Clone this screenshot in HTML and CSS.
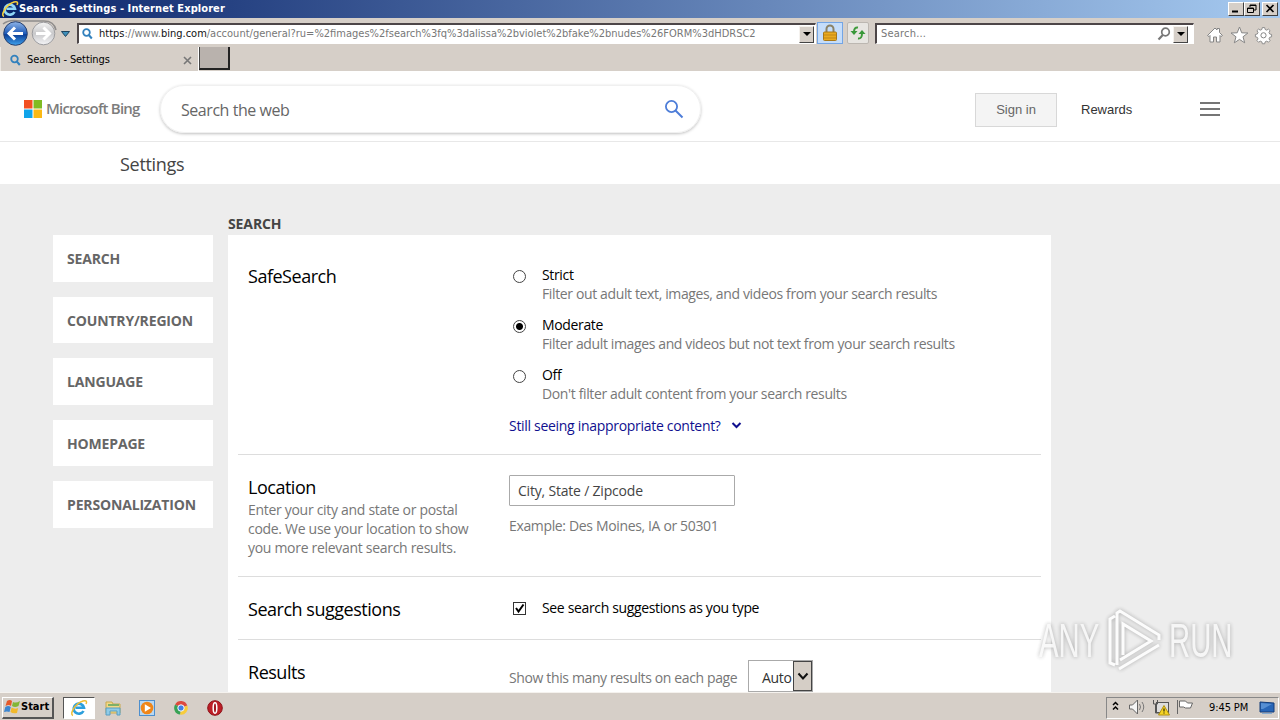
FILE: index.html
```html
<!DOCTYPE html>
<html lang="en">

<head>
    <meta charset="UTF-8">
    <meta name="viewport" content="width=device-width, initial-scale=1.0">
    <title>Search - Settings</title>
    <link rel="stylesheet" href="styles.css">
</head>

<body>
    <div class="screen">
        <div class="titlebar">
            <svg class="ie" width="18" height="18" viewBox="0 0 18 18">
                <path d="M13.500 12A5.200 5 0 1 1 14 8.800H5.500" fill="none" stroke="#8fd6f8" stroke-width="2.600" />
                <path d="M3 16.500C-1 15.500 5 4.500 13 2c4-1 4 1 3 3" fill="none" stroke="#f5cf3c" stroke-width="1.600" />
            </svg>
            <span class="title">Search - Settings - Internet Explorer</span>
            <div class="winBtns">
                <div class="winBtn"><svg width="14" height="11"><path d="M3 8.500h6" stroke="#000" stroke-width="2" /></svg></div>
                <div class="winBtn"><svg width="14" height="11"><path d="M5 4V2h6v5H9M5 2.500h6M2.500 5h6v4.500h-6zM2.500 5.500h6" fill="none" stroke="#000" /></svg></div>
                <div class="winBtn closeBtn"><svg width="14" height="11"><path d="M3.500 2l7 7M10.500 2l-7 7" stroke="#000" stroke-width="1.700" /></svg></div>
            </div>
        </div>

        <div class="navbar">
            <svg class="arrows" width="76" height="28" viewBox="0 0 76 28">
                <defs>
                    <linearGradient id="blue" x1="0" y1="0" x2="0" y2="1">
                        <stop offset="0" stop-color="#8fb5e8" />
                        <stop offset=".5" stop-color="#1f5bb8" />
                        <stop offset=".55" stop-color="#0c3f98" />
                        <stop offset="1" stop-color="#3fa3ee" />
                    </linearGradient>
                    <linearGradient id="gray" x1="0" y1="0" x2="0" y2="1">
                        <stop offset="0" stop-color="#f4f4f4" />
                        <stop offset=".5" stop-color="#c9c9cb" />
                        <stop offset="1" stop-color="#f4f4f6" />
                    </linearGradient>
                </defs>
                <path d="M3 6Q9 1 20 3h24q10 0 12 9" fill="none" stroke="#8f8d8c" stroke-width="1.500" />
                <circle cx="15.500" cy="15.500" r="11.800" fill="url(#blue)" stroke="#27406f" />
                <path d="M23 15.500H9M15 9.500l-6 6 6 6" fill="none" stroke="#fff" stroke-width="3" />
                <circle cx="43.500" cy="15.500" r="11.300" fill="url(#gray)" stroke="#9c9c9f" />
                <path d="M36 15.500h13M43.500 9.500l6 6-6 6" fill="none" stroke="#fff" stroke-width="3" />
                <path d="M61.500 13.500h8l-4 5z" fill="#3f90ba" stroke="#1f4560" />
            </svg>
            <div class="address">
                <svg width="12" height="12" viewBox="0 0 12 12"><circle cx="4.500" cy="4.500" r="3.300" fill="none" stroke="#3281bd" stroke-width="1.800" /><path d="M6.800 7l3 3.500" stroke="#3281bd" stroke-width="2" /></svg>
                <span class="url"><span class="host">https</span>://www.<span class="host">bing.com</span>/account/general?ru=%2fimages%2fsearch%3fq%3dalissa%2bviolet%2bfake%2bnudes%26FORM%3dHDRSC2</span>
                <div class="dropBtn"></div>
            </div>
            <div class="lockBtn">
                <svg width="14" height="18" viewBox="0 0 14 18"><path d="M3.500 9V5a3.500 3.500 0 0 1 7 0v4" fill="none" stroke="#8b8266" stroke-width="2" /><rect x=".5" y="8" width="13" height="8.500" rx="1" fill="#eaaa1e" stroke="#a87818" /><path d="M1 11h12M1 14h12" stroke="#c18717" /></svg>
            </div>
            <div class="refreshBtn">
                <svg width="16" height="14" viewBox="0 0 16 14"><path d="M8 1.500Q4 1 4 6M8 12.500q4 .500 4-5" fill="none" stroke="#3f9b3c" stroke-width="2" /><path d="M.5 5h7L4 9zM8.500 8h7L12 4z" fill="#38983a" /></svg>
            </div>
            <div class="findBox">
                <span>Search...</span>
                <svg width="14" height="14" viewBox="0 0 14 14"><circle cx="8.500" cy="5" r="3.800" fill="none" stroke="#777" stroke-width="1.700" /><path d="M5.800 8L1.500 12.500" stroke="#777" stroke-width="2.200" /></svg>
                <div class="dropBtn"></div>
            </div>
            <svg class="tools" width="68" height="20" viewBox="0 0 68 20" fill="#fff" stroke="#858585">
                <path d="M1.500 10.500L9 3l2 2V3.500h2.500v4l3 3-1.500 1-1-1V17h-3.500v-5h-3v5H4v-6.500l-1 1z" />
                <path d="M33.500 2l2.200 5.800 6.200.2-4.900 3.800 1.700 6-5.200-3.400-5.200 3.400 1.700-6L25 8l6.200-.2z" />
                <path d="M56.700 2.500h2.600l.5 2.100 1.800.8 1.900-1.200 1.800 1.800-1.200 1.900.8 1.800 2.100.5v2.600l-2.100.5-.8 1.800 1.200 1.900-1.800 1.800-1.900-1.200-1.800.8-.5 2.100h-2.600l-.5-2.100-1.800-.8-1.900 1.200-1.800-1.800 1.200-1.900-.8-1.800-2.100-.5v-2.600l2.100-.5.8-1.800-1.200-1.900 1.800-1.800 1.900 1.200 1.800-.8z" transform="translate(5.300 .3) scale(.9)" />
                <circle cx="57.500" cy="10.300" r="2.600" />
            </svg>
        </div>

        <div class="tabbar">
            <div class="tab">
                <svg width="12" height="12" viewBox="0 0 12 12"><circle cx="4.500" cy="5" r="3.300" fill="none" stroke="#3281bd" stroke-width="1.800" /><path d="M6.800 7.500l3 3.500" stroke="#3281bd" stroke-width="2" /></svg>
                <span class="tabTitle">Search - Settings</span>
                <svg class="tabClose" width="9" height="9"><path d="M1 1l7 7M8 1L1 8" stroke="#777" stroke-width="1.600" /></svg>
            </div>
            <div class="newTab"></div>
        </div>

        <div class="page">
            <div class="header">
                <svg class="msLogo" width="18" height="18">
                    <path d="M0 0h8.500v8.500H0z" fill="#f25022" />
                    <path d="M9.500 0H18v8.500H9.500z" fill="#80bb22" />
                    <path d="M0 9.500h8.500V18H0z" fill="#10a4ea" />
                    <path d="M9.500 9.500H18V18H9.500z" fill="#fbb914" />
                </svg>
                <span class="brand">Microsoft Bing</span>
                <div class="searchBox">
                    <span>Search the web</span>
                    <svg width="20" height="20" viewBox="0 0 20 20"><circle cx="7.500" cy="7.500" r="5.600" fill="none" stroke="#4d7dd8" stroke-width="1.800" /><path d="M11.500 11.500l7 7" stroke="#4d7dd8" stroke-width="2" /></svg>
                </div>
                <div class="signIn">Sign in</div>
                <span class="rewards">Rewards</span>
                <div class="menu"><i></i><i></i><i></i></div>
            </div>
            <div class="subHeader"><span class="settings">Settings</span></div>

            <div class="content">
                <ul class="sideNav">
                    <li>SEARCH</li>
                    <li>COUNTRY/REGION</li>
                    <li>LANGUAGE</li>
                    <li>HOMEPAGE</li>
                    <li>PERSONALIZATION</li>
                </ul>
                <div class="main">
                    <h2>SEARCH</h2>
                    <div class="card">
                        <div class="row safe">
                            <div class="label"><h3>SafeSearch</h3></div>
                            <div class="field">
                                <div class="option">
                                    <span class="radio"></span>
                                    <div>
                                        <p class="name">Strict</p>
                                        <p class="desc">Filter out adult text, images, and videos from your search results</p>
                                    </div>
                                </div>
                                <div class="option">
                                    <span class="radio checked"></span>
                                    <div>
                                        <p class="name">Moderate</p>
                                        <p class="desc">Filter adult images and videos but not text from your search results</p>
                                    </div>
                                </div>
                                <div class="option">
                                    <span class="radio"></span>
                                    <div>
                                        <p class="name">Off</p>
                                        <p class="desc">Don't filter adult content from your search results</p>
                                    </div>
                                </div>
                                <div class="still"><span>Still seeing inappropriate content?</span>
                                    <svg width="11" height="8"><path d="M1.500 2l4 4 4-4" fill="none" stroke="#10108f" stroke-width="2" /></svg>
                                </div>
                            </div>
                        </div>
                        <div class="row location">
                            <div class="label">
                                <h3>Location</h3>
                                <p class="desc">Enter your city and state or postal<br>code. We use your location to show<br>you more relevant search results.</p>
                            </div>
                            <div class="field">
                                <div class="cityInput">City, State / Zipcode</div>
                                <p class="desc example">Example: Des Moines, IA or 50301</p>
                            </div>
                        </div>
                        <div class="row suggest">
                            <div class="label"><h3>Search suggestions</h3></div>
                            <div class="field">
                                <div class="option">
                                    <span class="check"><svg width="11" height="11"><path d="M2 5l2.500 3.500L9.500 1.500" fill="none" stroke="#000" stroke-width="2" /></svg></span>
                                    <p class="name">See search suggestions as you type</p>
                                </div>
                            </div>
                        </div>
                        <div class="row results">
                            <div class="label"><h3>Results</h3></div>
                            <div class="field">
                                <p class="desc">Show this many results on each page</p>
                                <div class="select"><span>Auto</span>
                                    <div class="selectBtn"><svg width="12" height="9"><path d="M1.500 1.500L6 6.500l4.500-5" fill="none" stroke="#111" stroke-width="2" /></svg></div>
                                </div>
                            </div>
                        </div>
                    </div>
                </div>
            </div>

            <div class="watermark">
                <span>ANY</span>
                <svg width="60" height="66" viewBox="0 0 60 66" fill="none" stroke="#fff" stroke-width="3">
                    <path d="M10 8L5 11v44l5 2M12 57V5L15 3 54 27v5M18 47V16l28 17-31 19M54 37L14 61" />
                </svg>
                <span>RUN</span>
            </div>
        </div>

        <div class="taskbar">
            <div class="start">
                <svg width="17" height="16" viewBox="0 0 17 16">
                    <path d="M3 2q3-2 5 0L7 7Q5 5 1.500 7z" fill="#e5592a" />
                    <path d="M9 3q3 1.500 7-1l-1.500 5Q11 9 8 7z" fill="#82b636" />
                    <path d="M1.300 8q3-2 5.500 0l-1.300 5Q3 12 0 13z" fill="#3d86d0" />
                    <path d="M7.600 8.500q3 2 6.500.500L13 14q-4 1-6.500-1z" fill="#f2b92c" />
                </svg>
                <span>Start</span>
            </div>
            <div class="quick">
                <div class="app active">
                    <svg width="18" height="18" viewBox="0 0 18 18">
                        <path d="M13.500 12A5.200 5 0 1 1 14 8.800H5.500" fill="none" stroke="#2c9fdc" stroke-width="2.600" />
                        <path d="M3 16.500C-1 15.500 5 4.500 13 2c4-1 4 1 3 3" fill="none" stroke="#edbd35" stroke-width="1.500" />
                    </svg>
                </div>
                <div class="app">
                    <svg width="18" height="18" viewBox="0 0 18 18">
                        <path d="M2 3h6l1 2h7v9H2z" fill="#f2d987" stroke="#c9a94f" />
                        <path d="M4 6h11" stroke="#7eb068" stroke-width="2" />
                        <path d="M2 16V9h14v7h-3v-4H6v4z" fill="#8ecbe7" stroke="#579dc2" />
                    </svg>
                </div>
                <div class="app">
                    <svg width="18" height="18" viewBox="0 0 18 18">
                        <rect x="1.500" y="1.500" width="15" height="15" fill="#b9d8f2" stroke="#4d8fce" />
                        <circle cx="9" cy="9" r="6.300" fill="#f08619" />
                        <path d="M6.800 5.300v7.400L13 9z" fill="#fff" />
                    </svg>
                </div>
                <div class="app">
                    <svg width="18" height="18" viewBox="0 0 18 18">
                        <path d="M9 9L3.100 5.500A6.700 6.700 0 0 1 15.300 6.500z" fill="#dd4a3e" />
                        <path d="M9 9l6.300-2.500A6.700 6.700 0 0 1 8 15.600z" fill="#f8cc3b" />
                        <path d="M9 9l-1 6.600A6.700 6.700 0 0 1 3.100 5.500z" fill="#38a255" />
                        <circle cx="9" cy="9" r="3.200" fill="#4280e5" stroke="#fff" />
                    </svg>
                </div>
                <div class="app">
                    <svg width="18" height="18" viewBox="0 0 18 18">
                        <circle cx="9" cy="9" r="7.300" fill="#bd1e26" stroke="#8d1118" />
                        <ellipse cx="9" cy="9" rx="1.800" ry="5.200" fill="#a01820" stroke="#fff" stroke-width="1.500" />
                    </svg>
                </div>
            </div>
            <div class="tray">
                <svg class="trayIcons" width="88" height="18" viewBox="0 0 88 18">
                    <path d="M2 6l2.500-2.500L7 6M2 10.500L4.500 8 7 10.500" fill="none" stroke="#000" stroke-width="1.500" />
                    <path d="M18.500 6h3l5-5v14l-5-5h-3z" fill="#f5f5f5" stroke="#666" />
                    <path d="M28.500 5q2 3 0 6M31 3q3.500 5 0 10" fill="none" stroke="#777" />
                    <rect x="45.500" y="3.500" width="12" height="10" fill="#ddd" stroke="#555" />
                    <path d="M42.500 1v4h4V1M44.500 5v9h5" fill="none" stroke="#555" />
                    <path d="M53 6.500l5.500 9.500H47.500z" fill="#f5d324" stroke="#b29212" />
                    <path d="M53 9.500v3M53 13.500v1" stroke="#000" />
                    <path d="M66.500 1v14M68.500 2h6l2 2h5l-2 5h-5l-2-1h-4z" fill="#fff" stroke="#666" />
                </svg>
                <span class="clock">9:45 PM</span>
                <svg width="16" height="14" viewBox="0 0 16 14"><path d="M1 1l14 1v9H1z" fill="#2866b7" stroke="#143d79" /><path d="M2 2l11 1-9 5H2z" fill="#568fd3" /><path d="M3 12.500h10" stroke="#86abd0" /></svg>
            </div>
        </div>
    </div>
</body>

</html>
```
FILE: styles.css
```css
* {
    margin: 0;
    padding: 0;
    box-sizing: border-box;
    list-style: none;
}

body {
    overflow: hidden;
    font-family: "Open Sans", "Noto Sans", sans-serif;
}

svg {
    display: block;
    flex: none;
}

.screen {
    width: 1280px;
    height: 720px;
    display: flex;
    flex-direction: column;
    background: #d6cfc8;
    white-space: nowrap;
}

/* browser window */
.titlebar {
    height: 18px;
    flex: none;
    display: flex;
    align-items: center;
    padding: 0 2px 0 1px;
    background: linear-gradient(to right, #0a246a, #a6caf0);
    color: #fff;
}

.title {
    font: bold 11px/18px "DejaVu Sans Condensed", "DejaVu Sans", sans-serif;
    letter-spacing: 0.08px;
    margin-right: auto;
}

.winBtns {
    display: flex;
}

.winBtn {
    width: 16px;
    height: 14px;
    background: #d6cfc8;
    border: 1px solid #fff;
    border-right-color: #404040;
    border-bottom-color: #404040;
}

.closeBtn {
    margin-left: 2px;
}

.navbar {
    height: 29px;
    flex: none;
    display: flex;
    padding-top: 5px;
}

.arrows {
    margin: -5px 1px 0 0;
}

.address,
.findBox {
    height: 21px;
    display: flex;
    align-items: center;
    background: #fff;
    border: 1px solid #fff;
    border-top: 2px solid #4d4648;
    border-left: 2px solid #4d4648;
    font: 11px/18px "DejaVu Sans Condensed", "DejaVu Sans", sans-serif;
    color: #777;
}

.address {
    width: 739px;
    padding-left: 3px;
}

.url {
    margin-left: 5px;
    margin-right: auto;
}

.host {
    color: #111;
}

.dropBtn {
    width: 15px;
    height: 17px;
    flex: none;
    background: #d6cfc8;
    border: 1px solid #f5f2ee;
    border-right-color: #444;
    border-bottom-color: #444;
    display: flex;
    align-items: center;
    justify-content: center;
}

.address .dropBtn {
    margin-right: 1px;
}

.dropBtn::after {
    content: "";
    border: 4px solid transparent;
    border-top-color: #000;
    border-bottom: 0;
}

.lockBtn,
.refreshBtn {
    height: 22px;
    display: flex;
    align-items: center;
    justify-content: center;
    margin-top: -1px;
}

.lockBtn {
    width: 26px;
    margin-left: 1px;
    background: #c5ddfa;
    border: 1px solid #73a5e5;
}

.refreshBtn {
    width: 22px;
    margin-left: 4px;
    background: #e7e5e1;
    border: 1px solid #bcb7b1;
    border-radius: 2px;
}

.findBox {
    width: 319px;
    margin-left: 6px;
    padding: 0 5px 0 4px;
}

.findBox span {
    margin-right: auto;
    letter-spacing: 0.2px;
}

.findBox svg {
    margin-right: 2px;
}

.tools {
    margin: 2px 0 0 12px;
}

.tabbar {
    height: 24px;
    flex: none;
    display: flex;
}

.tab {
    width: 199px;
    display: flex;
    align-items: center;
    padding: 2px 6px 0 9px;
    border-left: 1px solid #eeeae4;
    border-right: 1px solid #fff;
    font: 11px/20px "DejaVu Sans Condensed", "DejaVu Sans", sans-serif;
}

.tabTitle {
    margin-left: 5px;
    margin-right: auto;
    letter-spacing: -0.1px;
}

.newTab {
    width: 31px;
    height: 23px;
    background: #b9b2ad;
    border: 1px solid #f5f2ee;
    border-width: 0 2px 2px 1px;
    border-right-color: #222;
    border-bottom-color: #222;
    border-left-color: #444;
}

/* page */
.page {
    height: 621px;
    flex: none;
    background: #ededed;
    position: relative;
    overflow: hidden;
}

.header {
    height: 71px;
    display: flex;
    align-items: center;
    padding: 7px 60px 0 24px;
    background: #fff;
    border-bottom: 1px solid #e8e8e8;
}

.msLogo {
    margin-top: -2px;
}

.brand {
    width: 94px;
    margin: -3px 20px 0 4px;
    font: 600 15px/20px "Open Sans", sans-serif;
    letter-spacing: -0.8px;
    color: #7c7c7c;
}

.searchBox {
    width: 541px;
    height: 48px;
    margin-top: -1px;
    margin-right: 274px;
    padding: 0 16px 0 20px;
    display: flex;
    align-items: center;
    justify-content: space-between;
    border-radius: 25px;
    border: 1px solid #f0f0f0;
    box-shadow: 0 1px 3px rgba(0, 0, 0, 0.25);
    font-size: 16px;
    letter-spacing: -0.45px;
    color: #666;
}

.searchBox span {
    padding-top: 2px;
}

.signIn,
.rewards {
    font: 13px/32px "Liberation Sans", sans-serif;
}

.signIn {
    width: 82px;
    height: 34px;
    text-align: center;
    background: #f4f4f4;
    border: 1px solid #d8d8d8;
    color: #666;
}

.rewards {
    margin-left: 24px;
    margin-right: auto;
    color: #333;
}

.menu {
    width: 20px;
    height: 14px;
    margin-top: -1px;
    display: flex;
    flex-direction: column;
    justify-content: space-between;
}

.menu i {
    height: 2px;
    background: #767676;
}

.subHeader {
    height: 42px;
    padding-left: 120px;
    background: #fff;
    font-size: 18px;
    letter-spacing: -0.3px;
    line-height: 44px;
    color: #444;
}

.content {
    display: flex;
    padding-left: 53px;
}

.sideNav {
    width: 160px;
    margin: 51px 15px 0 0;
}

.sideNav li {
    height: 46.6px;
    margin-bottom: 15px;
    padding-left: 14px;
    background: #fff;
    font-size: 14px;
    font-weight: bold;
    letter-spacing: -0.16px;
    line-height: 48px;
    color: #666;
}

.main {
    width: 823px;
}

.main h2 {
    height: 51px;
    padding-top: 31px;
    font-size: 14px;
    letter-spacing: -0.1px;
    line-height: 18px;
    color: #444;
}

.card {
    height: 460px;
    padding: 0 10px;
    background: #fff;
}

.row {
    display: flex;
    border-bottom: 1px solid #ddd;
    padding-left: 10px;
}

.label {
    width: 261px;
    flex: none;
}

.label h3 {
    font-size: 18px;
    letter-spacing: -0.48px;
    line-height: 24px;
    font-weight: normal;
}

.safe {
    height: 220px;
    padding-top: 30px;
}

.safe h3 {
    margin-top: -1px;
}

.location {
    height: 122px;
    padding-top: 20px;
}

.suggest {
    height: 63px;
    padding-top: 20px;
}

.results {
    height: 80px;
    padding-top: 20px;
    border: 0;
}

.name,
.desc,
.still,
.cityInput,
.select {
    font-size: 14px;
    letter-spacing: -0.35px;
    line-height: 19px;
}

.desc {
    letter-spacing: -0.37px;
    color: #777;
}

.option {
    display: flex;
    height: 50.2px;
    padding-left: 4px;
}

.safe .option > div {
    margin-top: -1px;
}

.name {
    padding-top: 1px;
}

.radio {
    width: 13px;
    height: 13px;
    margin: 5px 16px 0 0;
    border: 1px solid #444;
    border-radius: 50%;
}

.checked {
    background: radial-gradient(circle, #000 3px, #fff 4px);
}

.still {
    display: flex;
    align-items: center;
    gap: 10px;
    letter-spacing: -0.3px;
    color: #10108f;
}

.cityInput {
    width: 226px;
    height: 31px;
    border: 1px solid #aaa;
    border-radius: 1px;
    padding-left: 8px;
    letter-spacing: -0.2px;
    line-height: 30px;
    color: #444;
}

.example {
    margin-top: 10px;
    letter-spacing: -0.35px;
}

.location .label .desc {
    margin-top: 1px;
    letter-spacing: -0.3px;
}

.check {
    width: 13px;
    height: 13px;
    margin: 5px 16px 0 0;
    border: 1px solid #333;
}

.results .field {
    display: flex;
}

.results .desc {
    width: 229px;
    margin-right: 10px;
    line-height: 35px;
}

.select {
    width: 65px;
    height: 32px;
    border: 1px solid #aaa;
    padding-left: 13px;
    display: flex;
    justify-content: space-between;
    line-height: 33px;
    color: #333;
}

.selectBtn {
    width: 19px;
    height: 30px;
    background: #d5cec6;
    border: 1px solid #444;
    display: flex;
    align-items: center;
    justify-content: center;
}

.watermark {
    position: absolute;
    left: 1039px;
    top: 537px;
    height: 66px;
    display: flex;
    align-items: center;
    gap: 4px;
    color: #f8f8f8;
    font: 48px/66px "Liberation Sans", sans-serif;
    filter: drop-shadow(0 0 2px rgba(0, 0, 0, 0.35));
    opacity: 0.85;
}

.watermark span {
    width: 62px;
    transform: scaleX(0.61);
    transform-origin: left;
}

/* taskbar */
.taskbar {
    height: 28px;
    flex: none;
    display: flex;
    align-items: center;
    padding: 2px 1px 0 2px;
    border-top: 1px solid #f5f2ee;
}

.start {
    width: 52px;
    height: 22px;
    display: flex;
    align-items: center;
    padding-left: 1px;
    border: 1px solid #fff;
    border-right: 2px solid #555;
    border-bottom: 2px solid #555;
    font: bold 11px/18px "DejaVu Sans Condensed", "DejaVu Sans", sans-serif;
}

.quick {
    display: flex;
    margin-left: 9px;
    margin-right: auto;
}

.app {
    width: 32px;
    height: 22px;
    margin-right: 2px;
    display: flex;
    align-items: center;
    justify-content: center;
}

.active {
    background: #fff;
    border: 1px solid #555;
    border-right-color: #fff;
    border-bottom-color: #fff;
}

.tray {
    width: 173px;
    height: 22px;
    display: flex;
    align-items: center;
    padding-left: 4px;
    border: 1px solid #888;
    border-right-color: #fff;
    border-bottom-color: #fff;
    font: 11px/20px "DejaVu Sans Condensed", "DejaVu Sans", sans-serif;
    letter-spacing: -0.1px;
}

.clock {
    width: 40px;
    margin: 0 10px 0 10px;
}
```
